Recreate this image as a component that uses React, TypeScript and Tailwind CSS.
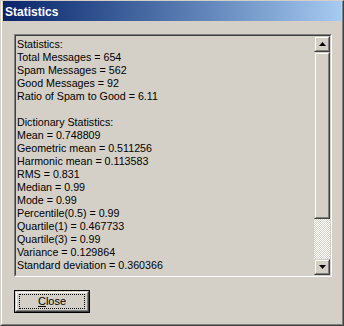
const lines = [
  "Statistics:",
  "Total Messages = 654",
  "Spam Messages = 562",
  "Good Messages = 92",
  "Ratio of Spam to Good = 6.11",
  "",
  "Dictionary Statistics:",
  "Mean = 0.748809",
  "Geometric mean = 0.511256",
  "Harmonic mean = 0.113583",
  "RMS = 0.831",
  "Median = 0.99",
  "Mode = 0.99",
  "Percentile(0.5) = 0.99",
  "Quartile(1) = 0.467733",
  "Quartile(3) = 0.99",
  "Variance = 0.129864",
  "Standard deviation = 0.360366",
];

// classic raised 3d box
const Raised: React.FC<{ className?: string; children?: React.ReactNode }> = ({ className, children }) => (
  <div className={`border border-t-[#d4d0c8] border-l-[#d4d0c8] border-r-[#404040] border-b-[#404040] ${className ?? ""}`}>
    <div className="flex h-full w-full items-center justify-center border border-t-white border-l-white border-r-[#808080] border-b-[#808080] bg-[#d4d0c8]">
      {children}
    </div>
  </div>
);

const Arrow: React.FC<{ up?: boolean }> = ({ up }) => (
  <svg width="7" height="4" viewBox="0 0 7 4" className="block">
    {up ? <path d="M3.5 0 L7 4 L0 4 Z" fill="#000" /> : <path d="M0 0 L7 0 L3.5 4 Z" fill="#000" />}
  </svg>
);

export default function App() {
  return (
    <div
      className="h-[326px] w-[344px] border border-t-[#d4d0c8] border-l-[#d4d0c8] border-r-[#404040] border-b-[#404040] bg-[#d4d0c8]"
      style={{ fontFamily: '"Liberation Sans", Arial, sans-serif' }}
    >
      <div className="flex h-full flex-col border-l border-r border-b border-l-white border-r-[#808080] border-b-[#808080] px-px">
        {/* Title bar */}
        <div className="flex h-[20px] items-center bg-gradient-to-r from-[#0a246a] to-[#a6caf0] pl-[2px] pt-[1px]">
          <span className="text-[12px] font-bold leading-none text-white">Statistics</span>
        </div>

        {/* Text field */}
        <div className="ml-[11px] mt-[13px] h-[243px] w-[318px] border border-t-[#808080] border-l-[#808080] border-r-white border-b-white">
          <div className="flex h-full border border-t-[#404040] border-l-[#404040] border-r-[#d4d0c8] border-b-[#d4d0c8]">
            <div className="flex-1 overflow-hidden pl-px pt-[2px] text-[10.7px] leading-[13px] text-black">
              {lines.map((l, i) => (
                <div key={i} className="h-[13px] whitespace-pre">
                  {l}
                </div>
              ))}
            </div>
            <div className="flex w-[16px] flex-col">
              <Raised className="h-[16px]">
                <Arrow up />
              </Raised>
              <Raised className="h-[167px]" />
              <div className="flex-1 bg-[image:repeating-conic-gradient(#ffffff_0_25%,#d4d0c8_0_50%)] bg-[length:2px_2px]" />
              <Raised className="h-[16px]">
                <Arrow />
              </Raised>
            </div>
          </div>
        </div>

        {/* Close button */}
        <div className="ml-[11px] mt-[13px] h-[23px] w-[76px] border border-black">
          <Raised className="h-full w-full">
            <div className="flex h-[15px] w-[66px] items-center justify-center border border-dotted border-black text-[11px] leading-none text-black">
              <span>
                <span className="underline underline-offset-1">C</span>lose
              </span>
            </div>
          </Raised>
        </div>
      </div>
    </div>
  );
}
